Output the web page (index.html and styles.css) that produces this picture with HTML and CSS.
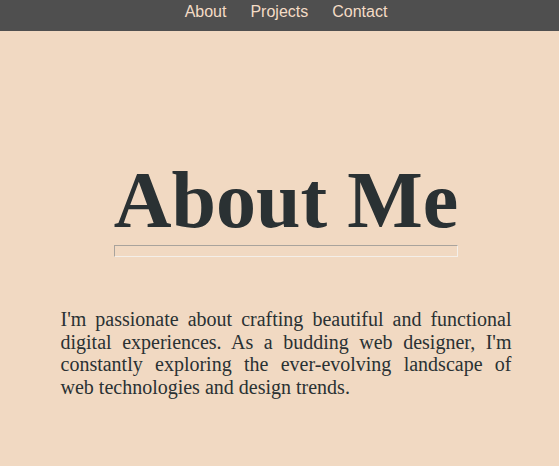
FILE: index.html
```html
<!DOCTYPE html>
<html>
<head>
<meta charset="utf-8">
<link rel="stylesheet" href="styles.css">
</head>
<body>
<header class="topbar">
  <nav class="nav">
    <a href="#" class="nav-link">About</a>
    <a href="#" class="nav-link">Projects</a>
    <a href="#" class="nav-link">Contact</a>
  </nav>
</header>
<main class="main">
  <section class="about">
    <div class="title-wrap">
      <h1 class="title">About Me</h1>
      <hr class="rule">
    </div>
    <p class="intro">I'm passionate about crafting beautiful and functional digital experiences. As a budding web designer, I'm constantly exploring the ever-evolving landscape of web technologies and design trends.</p>
  </section>
</main>
</body>
</html>
```

FILE: styles.css
```css
html, body {
  margin: 0;
  padding: 0;
}
body {
  background: #f1d9c2;
  font-family: "Liberation Serif", "Times New Roman", serif;
  color: #2a3133;
  height: 466px;
  overflow: hidden;
}
.topbar {
  background: #4f4f4f;
  height: 31px;
}
.nav {
  display: flex;
  justify-content: center;
  gap: 24px;
  padding-left: 13px;
  padding-top: 2px;
}
.nav-link {
  font-family: "Liberation Sans", Arial, sans-serif;
  font-size: 16px;
  color: #f4dcc6;
  text-decoration: none;
  line-height: 20px;
}
.main {
  padding-left: 13px;
}
.about {
  display: flex;
  flex-direction: column;
  align-items: center;
}
.title-wrap {
  display: flex;
  flex-direction: column;
  margin-top: 123px;
}
.title {
  margin: 0;
  font-size: 80px;
  font-weight: bold;
  line-height: 92px;
  color: #2a3133;
}
.rule {
  margin: 0;
  margin-top: -1px;
  height: 10px;
  border-style: solid;
  border-width: 1px;
  border-top-color: #a9a39c;
  border-left-color: #a9a39c;
  border-right-color: #f4efe9;
  border-bottom-color: #f4efe9;
}
.intro {
  width: 451px;
  margin: 51px 0 0;
  font-size: 20px;
  line-height: 22.5px;
  text-align: justify;
  color: #2a3133;
}
```
